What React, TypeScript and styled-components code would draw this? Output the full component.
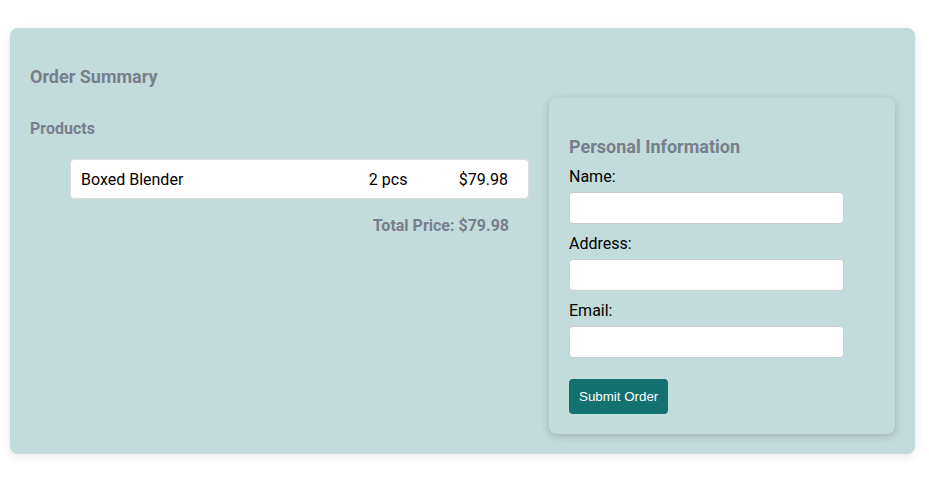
import React from 'react';
import styled, { createGlobalStyle } from 'styled-components';

const GlobalStyle = createGlobalStyle`
  html, body {
    margin: 0;
    padding: 0;
    background: #ffffff;
  }

  body {
    font-family: Roboto, 'Liberation Sans', sans-serif;
    color: #000000;
  }

  * {
    box-sizing: border-box;
  }
`;

// Styled Components

const Page = styled.div`
  padding: 28px 14px 27px 10px;
`;

const SummaryCard = styled.section`
  width: 905px;
  padding: 20px;
  background: #c2dcdb;
  border-radius: 8px;
  box-shadow: 0 2px 10px rgba(0, 0, 0, 0.1);
`;

const Heading = styled.h2`
  margin: 18px 0 11px 0;
  color: #787f8c;
  font-size: 18px;
  font-weight: 700;
  line-height: 21px;
`;

const Columns = styled.div`
  display: flex;
  align-items: flex-start;
  gap: 20px;
`;

const ProductsColumn = styled.div`
  flex: 1;
  min-width: 0;
`;

const SubHeading = styled.h3`
  margin: 21px 0 21px 0;
  color: #787f8c;
  font-size: 16px;
  font-weight: 700;
  line-height: 19px;
`;

const ProductList = styled.ul`
  margin: 0;
  padding: 0 0 0 40px;
  list-style: none;
`;

const ProductRow = styled.li`
  display: flex;
  height: 40px;
  align-items: center;
  padding: 0 20px 0 10px;
  border: 1px solid #dcdcdc;
  background: #ffffff;
  border-radius: 4px;
  font-size: 16px;
`;

const ProductName = styled.span`
  flex: 1;
`;

const ProductQty = styled.span`
  width: 90px;
`;

const ProductPrice = styled.span``;

const TotalPrice = styled.p`
  margin: 17px 20px 0 0;
  color: #787f8c;
  font-size: 16px;
  font-weight: 700;
  line-height: 19px;
  text-align: right;
`;

const InfoCard = styled.form`
  width: 40%;
  flex-shrink: 0;
  padding: 20px;
  border-radius: 8px;
  box-shadow: 0 2px 8px rgba(0, 0, 0, 0.2);
`;

const InfoTitle = styled.h3`
  margin: 18px 0 10px 0;
  color: #787f8c;
  font-size: 18px;
  font-weight: 700;
  line-height: 21px;
`;

const FieldLabel = styled.label`
  display: block;
  margin-bottom: 6px;
  font-size: 16px;
  line-height: 19px;
`;

const FieldInput = styled.input`
  display: block;
  width: 90%;
  height: 32px;
  padding: 0 8px;
  border: 1px solid #cccccc;
  margin-bottom: 10px;
  background: #ffffff;
  border-radius: 4px;
  font-family: Roboto, 'Liberation Sans', sans-serif;
  font-size: 14px;

  &:focus {
    outline: none;
  }
`;

const SubmitButton = styled.button`
  display: block;
  height: 35px;
  padding: 0 10px;
  border: none;
  margin-top: 21px;
  background: #137170;
  border-radius: 4px;
  color: #ffffff;
  cursor: pointer;
  font-family: 'Liberation Sans', Arial, sans-serif;
  font-size: 13.333px;
`;

// Data

type Product = {
  id: number;
  name: string;
  quantity: number;
  price: number;
};

const products: Product[] = [
  { id: 1, name: 'Boxed Blender', quantity: 2, price: 79.98 },
];

const fields = [
  { id: 'name', label: 'Name:', type: 'text' },
  { id: 'address', label: 'Address:', type: 'text' },
  { id: 'email', label: 'Email:', type: 'email' },
];

// Function Components

const App = () => {
  const total = products.reduce((sum, p) => sum + p.price, 0);

  return (
    <Page>
      <GlobalStyle />
      <SummaryCard>
        <Heading>Order Summary</Heading>
        <Columns>
          <ProductsColumn>
            <SubHeading>Products</SubHeading>
            <ProductList>
              {products.map(p => (
                <ProductRow key={p.id}>
                  <ProductName>{p.name}</ProductName>
                  <ProductQty>{p.quantity} pcs</ProductQty>
                  <ProductPrice>${p.price.toFixed(2)}</ProductPrice>
                </ProductRow>
              ))}
            </ProductList>
            <TotalPrice>Total Price: ${total.toFixed(2)}</TotalPrice>
          </ProductsColumn>
          <InfoCard onSubmit={e => e.preventDefault()}>
            <InfoTitle>Personal Information</InfoTitle>
            {fields.map(f => (
              <div key={f.id}>
                <FieldLabel htmlFor={f.id}>{f.label}</FieldLabel>
                <FieldInput id={f.id} name={f.id} type={f.type} />
              </div>
            ))}
            <SubmitButton type="submit">Submit Order</SubmitButton>
          </InfoCard>
        </Columns>
      </SummaryCard>
    </Page>
  );
};

export default App;
